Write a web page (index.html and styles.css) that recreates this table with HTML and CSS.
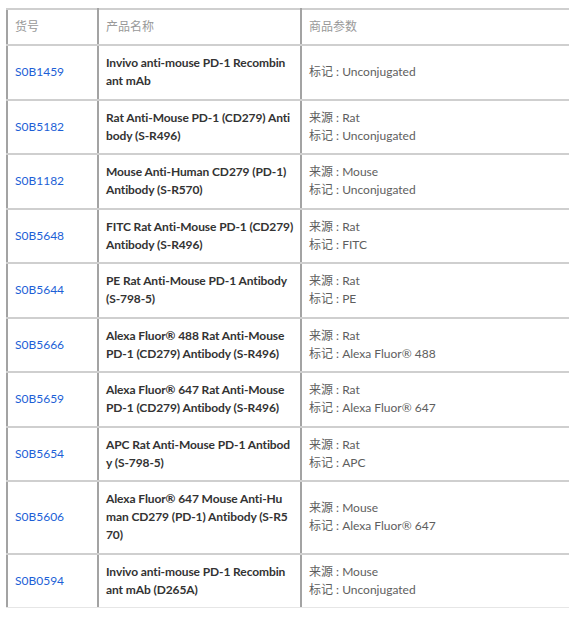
FILE: index.html
```html
<!DOCTYPE html>
<html lang="zh-CN">
<head>
<meta charset="utf-8">
<link rel="stylesheet" href="styles.css">
</head>
<body>
<div class="wrap">
<table class="prod">
  <colgroup><col class="c1"><col class="c2"><col class="c3"></colgroup>
  <thead>
    <tr><th>货号</th><th>产品名称</th><th>商品参数</th></tr>
  </thead>
  <tbody>
    <tr><td><a>S0B1459</a></td><td class="name">Invivo anti-mouse PD-1 Recombin<br>ant mAb</td><td class="param">标记 : Unconjugated</td></tr>
    <tr><td><a>S0B5182</a></td><td class="name">Rat Anti-Mouse PD-1 (CD279) Anti<br>body (S-R496)</td><td class="param">来源 : Rat<br>标记 : Unconjugated</td></tr>
    <tr><td><a>S0B1182</a></td><td class="name">Mouse Anti-Human CD279 (PD-1)<br>Antibody (S-R570)</td><td class="param">来源 : Mouse<br>标记 : Unconjugated</td></tr>
    <tr><td><a>S0B5648</a></td><td class="name">FITC Rat Anti-Mouse PD-1 (CD279)<br>Antibody (S-R496)</td><td class="param">来源 : Rat<br>标记 : FITC</td></tr>
    <tr><td><a>S0B5644</a></td><td class="name">PE Rat Anti-Mouse PD-1 Antibody<br>(S-798-5)</td><td class="param">来源 : Rat<br>标记 : PE</td></tr>
    <tr><td><a>S0B5666</a></td><td class="name">Alexa Fluor® 488 Rat Anti-Mouse<br>PD-1 (CD279) Antibody (S-R496)</td><td class="param">来源 : Rat<br>标记 : Alexa Fluor® 488</td></tr>
    <tr><td><a>S0B5659</a></td><td class="name">Alexa Fluor® 647 Rat Anti-Mouse<br>PD-1 (CD279) Antibody (S-R496)</td><td class="param">来源 : Rat<br>标记 : Alexa Fluor® 647</td></tr>
    <tr><td><a>S0B5654</a></td><td class="name">APC Rat Anti-Mouse PD-1 Antibod<br>y (S-798-5)</td><td class="param">来源 : Rat<br>标记 : APC</td></tr>
    <tr><td><a>S0B5606</a></td><td class="name">Alexa Fluor® 647 Mouse Anti-Hu<br>man CD279 (PD-1) Antibody (S-R5<br>70)</td><td class="param">来源 : Mouse<br>标记 : Alexa Fluor® 647</td></tr>
    <tr class="last"><td><a>S0B0594</a></td><td class="name">Invivo anti-mouse PD-1 Recombin<br>ant mAb (D265A)</td><td class="param">来源 : Mouse<br>标记 : Unconjugated</td></tr>
  </tbody>
</table>
</div>
</body>
</html>
```
FILE: styles.css
```css
html, body {
  margin: 0;
  padding: 0;
  background: #fff;
}
body {
  padding: 8px 2px 0 6px;
  font-family: Lato, "Noto Sans CJK SC", sans-serif;
  font-size: 12px;
  line-height: 18px;
  color: #333;
}
.wrap {
  width: 563px;
  height: 599px;
  overflow: hidden;
  border-bottom: 1px solid #e6e6e6;
}
.prod {
  width: 563px;
  border-collapse: collapse;
  table-layout: fixed;
}
.c1 { width: 91px; }
.c2 { width: 203px; }
.c3 { width: 269px; }
.prod th, .prod td {
  border-left: 2px solid #a3a3a3;
  border-right: 2px solid #a3a3a3;
  border-top: 2px solid #cfcfcf;
  border-bottom: 2px solid #cfcfcf;
  padding: 8.25px 7px;
  text-align: left;
  vertical-align: middle;
}
.prod th {
  padding: 8px 7px;
  font-weight: normal;
  color: #999;
}
.prod a {
  color: #1d5fd6;
  text-decoration: none;
}
.prod td.name {
  font-weight: bold;
  color: #333;
  letter-spacing: -0.1px;
  white-space: nowrap;
}
.prod td.param {
  color: #5e5e5e;
}
```
